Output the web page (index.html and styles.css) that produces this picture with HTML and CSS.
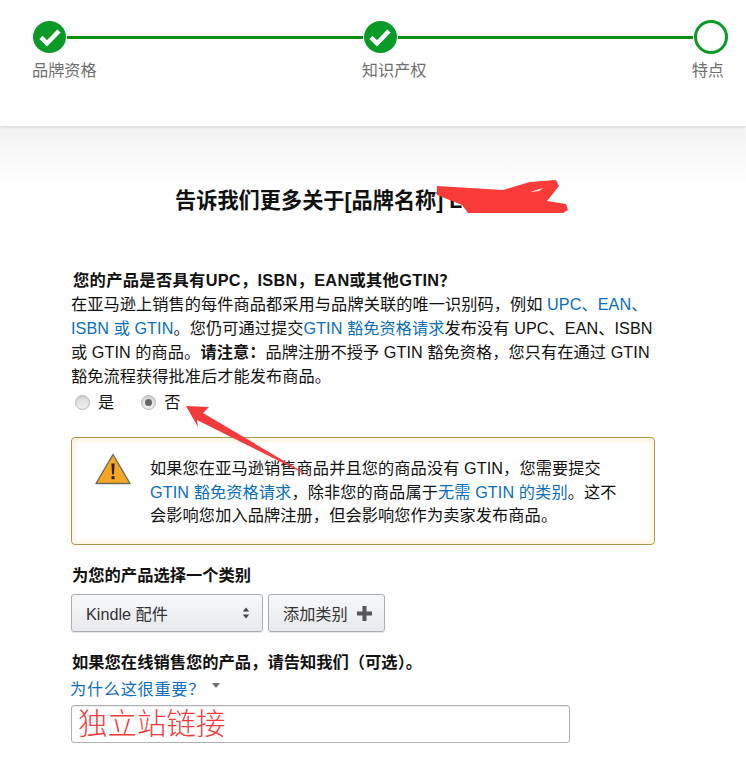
FILE: index.html
```html
<!DOCTYPE html>
<html lang="zh">
<head>
<meta charset="utf-8">
<title>品牌注册</title>
<link rel="stylesheet" href="styles.css">
</head>
<body>
<div class="page">
  <header class="stepper">
    <div class="track">
      <span class="dot done"><svg viewBox="0 0 32 32" width="24" height="24"><path d="M4 16.500l8 8L28 8" fill="none" stroke="#fff" stroke-width="6"/></svg></span>
      <span class="line"></span>
      <span class="dot done"><svg viewBox="0 0 32 32" width="24" height="24"><path d="M4 16.500l8 8L28 8" fill="none" stroke="#fff" stroke-width="6"/></svg></span>
      <span class="line"></span>
      <span class="dot current"></span>
    </div>
    <div class="labels">
      <span>品牌资格</span>
      <span>知识产权</span>
      <span>特点</span>
    </div>
  </header>
  <main class="content">
    <h1 class="title">告诉我们更多关于[品牌名称] L</h1>
    <h2 class="question">您的产品是否具有UPC，ISBN，EAN或其他GTIN？</h2>
    <p class="intro">在亚马逊上销售的每件商品都采用与品牌关联的唯一识别码，例如 <a href="#">UPC、EAN、<br>ISBN 或 GTIN</a>。您仍可通过提交<a href="#">GTIN 豁免资格请求</a>发布没有 UPC、EAN、ISBN<br>或 GTIN 的商品。<b>请注意：</b>品牌注册不授予 GTIN 豁免资格，您只有在通过 GTIN<br>豁免流程获得批准后才能发布商品。</p>
    <div class="radios">
      <label class="choice"><span class="radio"></span>是</label>
      <label class="choice"><span class="radio checked"></span>否</label>
    </div>
    <div class="alert">
      <svg class="warn" viewBox="0 0 36 32" width="36" height="32"><path d="M18 1.500L35 30.500H1z" fill="#f5a623" stroke="#6f6a5c" stroke-width="1.400" stroke-linejoin="round"/><path d="M16.400 10.500h3.200l-.7 11h-1.800z" fill="#222"/><rect x="16.500" y="23.200" width="3" height="3" fill="#222"/></svg>
      <p>如果您在亚马逊销售商品并且您的商品没有 GTIN，您需要提交<br><a href="#">GTIN 豁免资格请求</a>，除非您的商品属于<a href="#">无需 GTIN 的类别</a>。这不<br>会影响您加入品牌注册，但会影响您作为卖家发布商品。</p>
    </div>
    <h3 class="label cat">为您的产品选择一个类别</h3>
    <div class="controls">
      <div class="btn select">Kindle 配件
        <svg viewBox="0 0 8 12" width="8" height="12"><path d="M4 0.500L7.200 4.500H.8zM4 11.500L.8 7.500h6.400z" fill="#444"/></svg>
      </div>
      <div class="btn add">添加类别
        <svg viewBox="0 0 15 15" width="15" height="15"><path d="M5.500 0h4v5.500H15v4H9.500V15h-4V9.500H0v-4h5.500z" fill="#555"/></svg>
      </div>
    </div>
    <h3 class="label online">如果您在线销售您的产品，请告知我们（可选）。</h3>
    <div class="why"><a href="#">为什么这很重要？</a><span class="caret"></span></div>
    <div class="field">独立站链接</div>
  </main>
  <svg class="marks" viewBox="0 0 746 763" width="746" height="763">
    <path d="M437 186L503 190L530 182L556 180L559 186L547 201L566 204L568 210L563 213L468 213L462 205L437 195Z" fill="#fb3a3a"/>
    <path d="M530 192L543 188L539 191Z" fill="#fff"/>
    <path d="M186 406L209 407L203 413L313 478L197 420L198 427Z" fill="#f33b3b"/>
  </svg>
</div>
</body>
</html>
```
FILE: styles.css
```css
* { box-sizing: border-box; }
html, body { margin: 0; padding: 0; background: #fff; }
body {
  font-family: "Liberation Sans", "Noto Sans CJK SC", sans-serif;
  font-size: 16.200px;
  color: #111;
}
a { color: #0a6ebd; text-decoration: none; }
.page { position: relative; width: 746px; height: 763px; overflow: hidden; }
.marks { position: absolute; left: 0; top: 0; pointer-events: none; }

.stepper { height: 126px; padding: 20px 18px 0 32px; box-shadow: 0 1px 3px rgba(0,0,0,.14); position: relative; background: #fff; }
.track { display: flex; align-items: center; height: 34px; padding-left: 1px; }
.dot { width: 33px; height: 32px; border-radius: 50%; display: flex; align-items: center; justify-content: center; flex: none; }
.done { background: #0a9a27; }
.current { width: 34px; height: 34px; border: 3px solid #0a9a27; background: #fff; }
.line { flex: 1; height: 3px; background: #0a8f14; margin: 0 1px; }
.labels { display: flex; justify-content: space-between; margin: 6px 4px 0 0; color: #6f6f6f; font-size: 16.200px; line-height: 20px; }

.content { padding: 62px 91px 0 71px; background: linear-gradient(#f3f3f3, #fff 60px); height: 637px; }
.title { margin: 0 0 0 104px; font-size: 21.200px; line-height: 26px; font-weight: 700; white-space: nowrap; }
.question { margin: 54px 0 0 2px; font-size: 16.300px; line-height: 24px; font-weight: 700; letter-spacing: .3px; }
.intro { margin: 0; line-height: 24px; white-space: nowrap; letter-spacing: .07px; }
.radios { display: flex; gap: 27px; margin: 2px 0 0 4px; line-height: 24px; }
.choice { display: flex; align-items: center; gap: 8px; }
.radio { width: 15px; height: 15px; border-radius: 50%; border: 1px solid #b9b9b9; background: linear-gradient(#d8d8d8, #efefef); box-shadow: inset 0 1px 2px rgba(0,0,0,.08); display: flex; align-items: center; justify-content: center; }
.checked::after { content: ""; width: 7px; height: 7px; border-radius: 50%; background: #666; }

.alert { display: flex; align-items: flex-start; height: 108px; margin-top: 23px; padding: 15px 0 0 23px; border: 1px solid #ad9850; border-radius: 4px; box-shadow: inset 0 0 3px 4px #fdf6e6; background: #fff; }
.warn { flex: none; margin-right: 19px; }
.alert p { margin: 4px 0 0; line-height: 23.500px; white-space: nowrap; letter-spacing: .1px; }

.label { margin: 0 0 0 1px; font-size: 16.300px; line-height: 22px; font-weight: 700; }
.cat { margin-top: 19px; }
.controls { display: flex; gap: 5px; margin-top: 8px; }
.btn { height: 38px; display: flex; align-items: center; justify-content: space-between; border: 1px solid #a9adb3; border-radius: 3px; background: linear-gradient(#f7f8fa, #e7e9ec); box-shadow: 0 1px 1px rgba(0,0,0,.1); color: #333; padding: 0 12px 0 14px; white-space: nowrap; }
.select { width: 192px; }
.add { width: 117px; }
.online { margin-top: 19px; }
.why { display: flex; align-items: center; margin-top: 4px; margin-left: -1px; line-height: 22px; height: 24px; }
.why a { letter-spacing: .7px; }
.caret { width: 0; height: 0; margin: -8px 0 0 7px; border: 4px solid transparent; border-top: 5px solid #6f6f6f; border-bottom: 0; }
.field { width: 499px; height: 38px; margin-top: 4px; padding-left: 6px; border: 1px solid #b0b0b0; border-radius: 3px; box-shadow: inset 0 1px 1px rgba(0,0,0,.08); font-size: 29.500px; line-height: 36px; color: #f33b3b; font-weight: 300; background: #fff; }
```
